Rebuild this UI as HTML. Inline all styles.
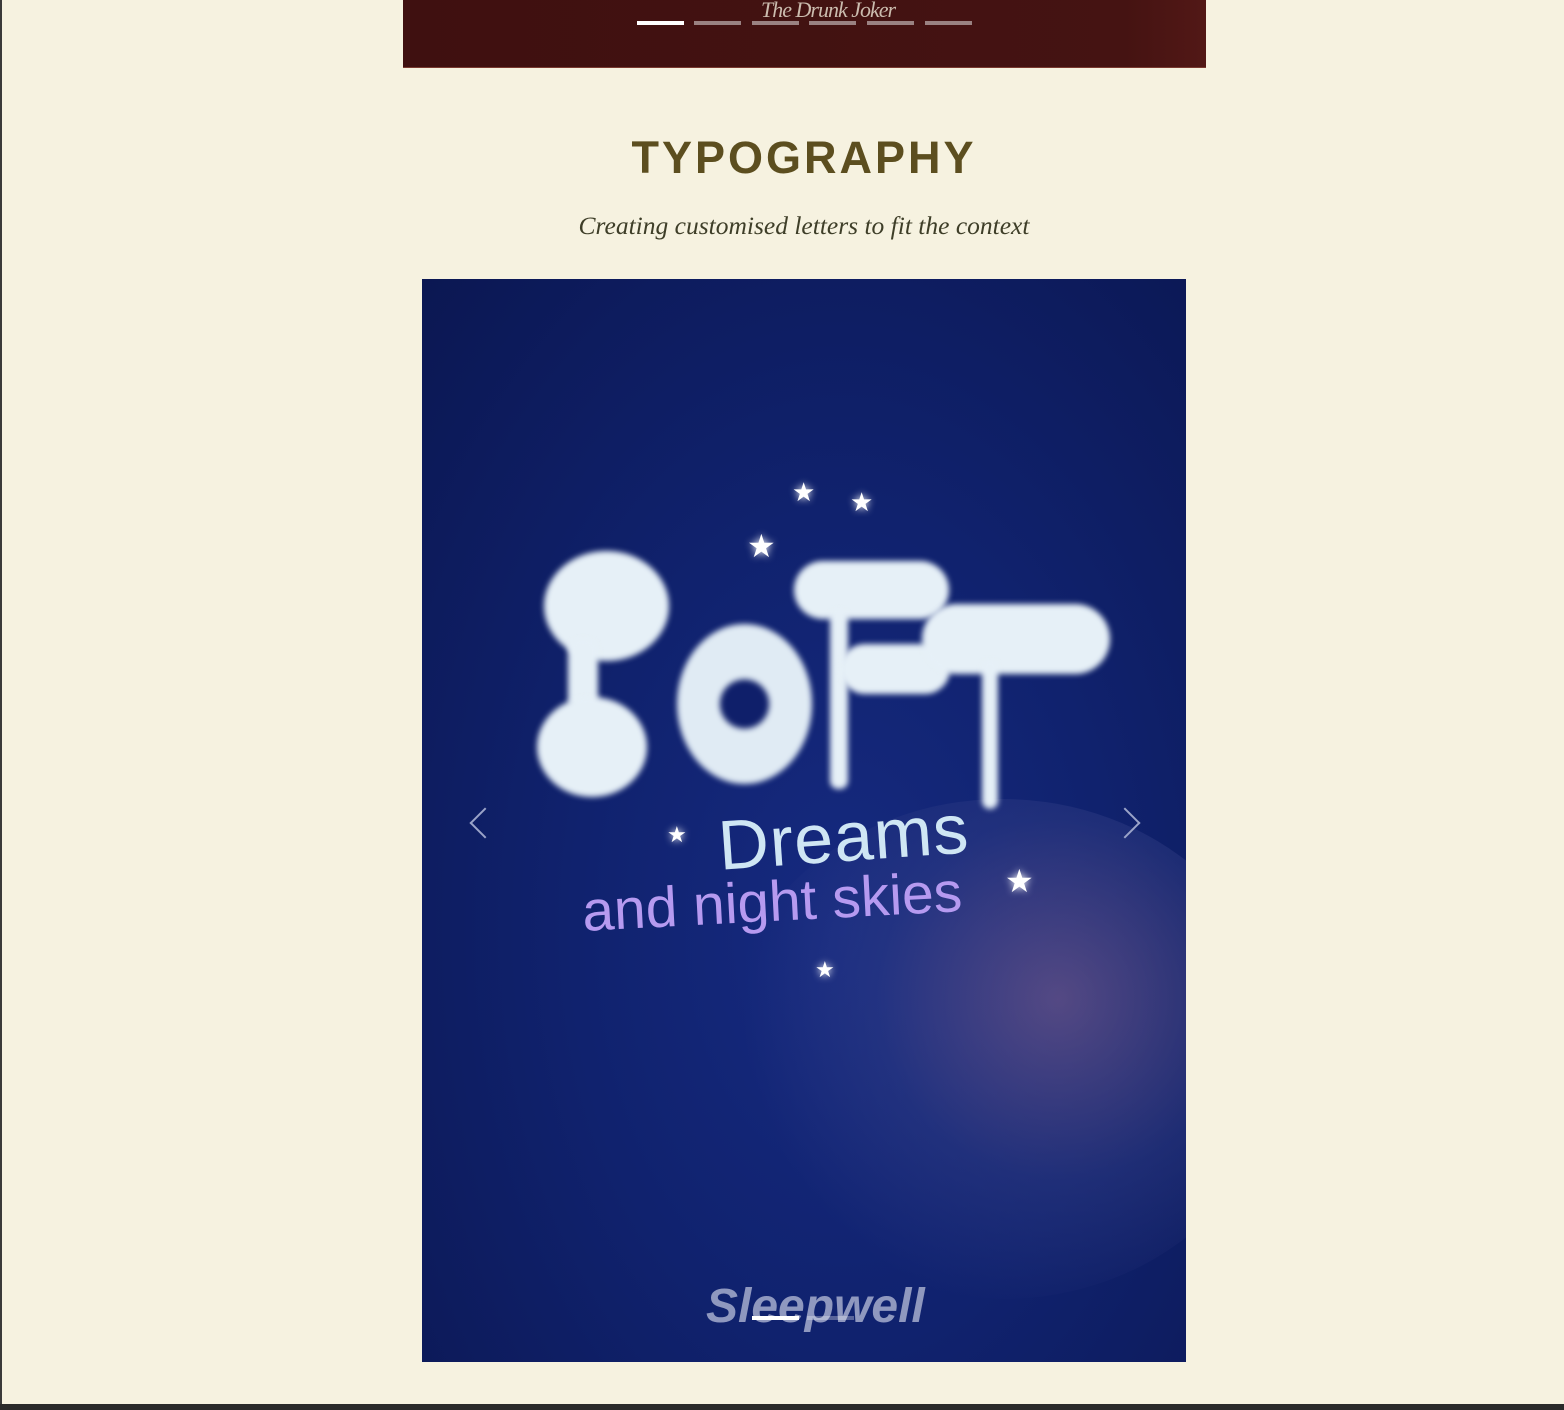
<!DOCTYPE html>
<html><head><style>
body{margin:0;width:1564px;height:1410px;background:#f6f2e0;position:relative;overflow:hidden;font-family:"Liberation Sans",sans-serif}
.edge{position:absolute;left:0;top:0;width:2px;height:1410px;background:#3a3a3a}
.bot{position:absolute;left:0;bottom:0;width:1564px;height:6px;background:#2a2a2a}
.hero{position:absolute;left:403px;top:0;width:803px;height:67px;background:linear-gradient(90deg,#3f1010,#451312 90%,#521816);border-bottom:1px solid #7a3a30}
.bar{position:absolute;top:21px;width:47px;height:4px;background:#9a8282}
.title{position:absolute;left:22px;width:1564px;text-align:center}
.img{position:absolute;left:422px;top:279px;width:764px;height:1083px;overflow:hidden;background:radial-gradient(ellipse at 55% 60%,#162a80 0%,#10226e 45%,#0b1752 100%)}
.c{position:absolute;background:#e6f0f7;border-radius:50%;filter:blur(3px)}
.s{position:absolute;color:#fff;font-size:26px;text-shadow:0 0 8px #fff}
.arrow{position:absolute;top:533px;width:20px;height:20px;border-left:2px solid #9aa3c8;border-bottom:2px solid #9aa3c8}
</style></head><body>
<div class="edge"></div>
<div class="hero">
<div style="position:absolute;left:358px;top:-3px;font-family:'Liberation Serif',serif;font-style:italic;font-size:22px;color:#cbbcae;letter-spacing:-1px">The Drunk Joker</div>
<div class="bar" style="left:234px;background:#fff"></div>
<div class="bar" style="left:291px"></div><div class="bar" style="left:349px"></div><div class="bar" style="left:406px"></div><div class="bar" style="left:464px"></div><div class="bar" style="left:522px"></div>
</div>
<div class="title" style="top:132px;font-size:45px;font-weight:bold;color:#5c4e1f;letter-spacing:3px">TYPOGRAPHY</div>
<div class="title" style="top:211px;font-family:'Liberation Serif',serif;font-style:italic;font-size:25.5px;color:#3e3e28">Creating customised letters to fit the context</div>
<div class="img">
<div style="position:absolute;left:300px;top:520px;width:560px;height:500px;border-radius:50%;background:radial-gradient(circle at 60% 40%,rgba(150,110,150,.5),rgba(60,70,140,.35) 40%,rgba(40,60,140,0) 70%)"></div>
<div class="c" style="left:122px;top:272px;width:125px;height:110px"></div>
<div class="c" style="left:146px;top:360px;width:30px;height:70px;border-radius:10px"></div>
<div class="c" style="left:115px;top:418px;width:110px;height:100px"></div>
<div class="c" style="left:255px;top:345px;width:135px;height:160px;background:radial-gradient(circle,#0f1f6a 22%,#e0ebf4 25%)"></div>
<div class="c" style="left:372px;top:282px;width:155px;height:58px;border-radius:30px"></div>
<div class="c" style="left:408px;top:330px;width:18px;height:180px;border-radius:8px"></div>
<div class="c" style="left:418px;top:365px;width:110px;height:50px;border-radius:25px"></div>
<div class="c" style="left:500px;top:325px;width:188px;height:70px;border-radius:35px"></div>
<div class="c" style="left:560px;top:380px;width:16px;height:150px;border-radius:8px"></div>
<div class="s" style="left:370px;top:198px">★</div><div class="s" style="left:428px;top:208px">★</div>
<div class="s" style="left:325px;top:248px;font-size:32px">★</div>
<div class="s" style="left:245px;top:543px;font-size:22px">★</div>
<div class="s" style="left:583px;top:583px;font-size:32px">★</div>
<div class="s" style="left:393px;top:678px;font-size:22px">★</div>
<div style="position:absolute;left:296px;top:518px;font-size:70px;color:#cfe6f4;transform:rotate(-4deg);letter-spacing:1px">Dreams</div>
<div style="position:absolute;left:160px;top:590px;font-size:57px;color:#b69af0;transform:rotate(-3deg)">and night skies</div>
<div class="arrow" style="left:52px;transform:rotate(45deg)"></div>
<div class="arrow" style="left:692px;transform:rotate(-135deg)"></div>
<div style="position:absolute;left:284px;top:1000px;font-size:48px;font-weight:bold;font-style:italic;color:#8f98bf">Sleepwell</div>
<div style="position:absolute;left:330px;top:1037px;width:47px;height:4px;background:#fff"></div>
<div style="position:absolute;left:385px;top:1037px;width:47px;height:4px;background:rgba(255,255,255,.3)"></div>
</div>
<div class="bot"></div>
</body></html>
